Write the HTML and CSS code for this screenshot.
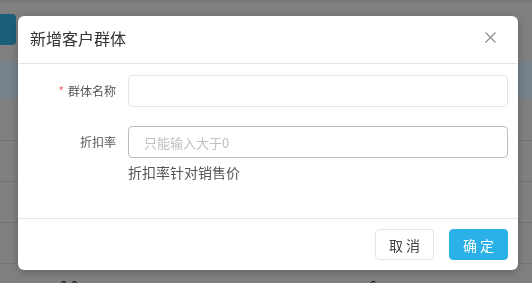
FILE: index.html
```html
<!DOCTYPE html>
<html lang="zh-CN">

    <head>
        <meta charset="UTF-8">
        <meta name="viewport" content="width=device-width, initial-scale=1.0">
        <title>新增客户群体</title>
        <link rel="stylesheet" href="styles.css">
    </head>

    <body>
        <div class="page">
            <div class="toolbar">
                <span class="tool-btn"></span>
            </div>
            <div class="thead"></div>
            <div class="row"></div>
            <div class="row"></div>
            <div class="row"></div>
            <div class="row"></div>
            <div class="row last">
                <span class="cell first">0.8</span>
                <span class="cell second">6</span>
            </div>
        </div>

        <div class="mask">
            <div class="dialog">
                <div class="dialog-header">
                    <span class="dialog-title">新增客户群体</span>
                    <button class="close" type="button" aria-label="关闭">
                        <svg width="11" height="11" viewBox="0 0 11 11">
                            <path d="M0.5 0.5L10.5 10.5M10.5 0.5L0.5 10.5" stroke="#8a8a8a" stroke-width="1.1" fill="none"/>
                        </svg>
                    </button>
                </div>
                <form class="dialog-body" id="groupForm">
                    <div class="form-item">
                        <label class="form-label" for="groupName"><span class="required">*</span>群体名称</label>
                        <div class="form-control">
                            <input class="input" type="text" id="groupName" name="groupName">
                        </div>
                    </div>
                    <div class="form-item">
                        <label class="form-label" for="discount">折扣率</label>
                        <div class="form-control">
                            <input class="input focus" type="text" id="discount" name="discount" placeholder="只能输入大于0">
                            <p class="hint">折扣率针对销售价</p>
                        </div>
                    </div>
                </form>
                <div class="dialog-footer">
                    <button class="btn" type="button">取 消</button>
                    <button class="btn primary" type="submit" form="groupForm">确 定</button>
                </div>
            </div>
        </div>
    </body>

</html>
```

FILE: styles.css
```css
body {
    font-family: "Noto Sans CJK SC", "Liberation Sans", sans-serif;
    background-color: #808080;
    margin: 0;
    height: 283px;
    overflow: hidden;
}

/* page behind the mask, already darkened */
.page {
    border-top: 3px solid #7a7a7a;
}

.toolbar {
    height: 57px;
    box-sizing: border-box;
    padding-top: 11px;
}

.tool-btn {
    display: block;
    width: 16px;
    height: 31px;
    background-color: #1a5f7a;
    border-radius: 0 4px 4px 0;
}

.thead {
    height: 40px;
    background-color: #76818a;
}

.row {
    height: 40px;
    border-bottom: 1px solid #727272;
}

.row.last {
    border-bottom: none;
    position: relative;
}

.cell {
    position: absolute;
    top: 12px;
    font-size: 13px;
    color: #1a1a1a;
}

.cell.first {
    left: 60px;
}

.cell.second {
    left: 369px;
}

/* dialog */
.mask {
    position: fixed;
    inset: 0;
}

.dialog {
    position: absolute;
    left: 18px;
    top: 16px;
    width: 500px;
    height: 254px;
    background-color: white;
    border-radius: 6px;
    box-shadow: 0 2px 8px rgba(0, 0, 0, 0.25);
    display: flex;
    flex-direction: column;
}

.dialog-header {
    height: 48px;
    box-sizing: border-box;
    border-bottom: 1px solid #e6e6e6;
    display: flex;
    align-items: center;
    justify-content: space-between;
    padding: 0 22px 0 12px;
}

.dialog-title {
    font-size: 16px;
    color: #333;
    margin-top: -3px;
}

.close {
    background: none;
    border: none;
    padding: 0;
    width: 11px;
    height: 11px;
    display: block;
    cursor: pointer;
    margin-top: -4px;
}

.close svg {
    display: block;
}

.dialog-body {
    flex: 1;
    margin: 0;
    padding: 11px 10px 0 0;
}

.form-item {
    display: flex;
    margin-bottom: 19px;
}

.form-label {
    width: 110px;
    flex: none;
    box-sizing: border-box;
    padding-right: 12px;
    text-align: right;
    font-size: 12px;
    color: #555;
    line-height: 32px;
}

.required {
    color: #f56c6c;
    margin-right: 4px;
}

.form-control {
    flex: 1;
}

.input {
    display: block;
    width: 100%;
    height: 32px;
    box-sizing: border-box;
    border: 1px solid #e6e6e6;
    border-radius: 4px;
    padding: 0 15px;
    font-family: inherit;
    font-size: 13px;
    color: #333;
    outline: none;
}

.input.focus {
    border-color: #bdbdbd;
}

.input::placeholder {
    color: #c0c0c0;
}

.hint {
    margin: 4px 0 0;
    font-size: 14px;
    color: #555;
    line-height: 20px;
}

.dialog-footer {
    height: 52px;
    box-sizing: border-box;
    border-top: 1px solid #e6e6e6;
    display: flex;
    justify-content: flex-end;
    align-items: flex-start;
    gap: 15px;
    padding: 10px 10px 0;
}

.btn {
    width: 59px;
    height: 31px;
    box-sizing: border-box;
    border: 1px solid #e6e6e6;
    border-radius: 4px;
    background-color: white;
    color: #444;
    font-family: inherit;
    font-size: 14px;
    padding: 0;
    cursor: pointer;
}

.btn.primary {
    background-color: #2bb1e7;
    border-color: #2bb1e7;
    color: white;
}
```
